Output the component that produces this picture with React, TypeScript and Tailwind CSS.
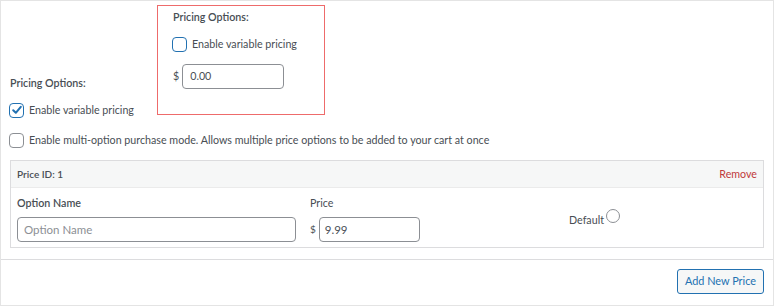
import React from "react";

function Checkbox({ checked, focus }: { checked?: boolean; focus?: boolean }) {
  return (
    <span
      className={`inline-flex h-[15px] w-[15px] shrink-0 items-center justify-center rounded-[4px] border bg-white ${
        focus ? "border-[#2271b1] border-[1.5px]" : "border-[#8c8f94]"
      }`}
    >
      {checked && (
        <svg width="12" height="12" viewBox="0 0 12 12">
          <path d="M2.2 6.2 L4.8 8.8 L9.8 2.8" fill="none" stroke="#2271b1" strokeWidth="2" strokeLinecap="round" strokeLinejoin="round" />
        </svg>
      )}
    </span>
  );
}

export default function App() {
  return (
    <div
      className="w-[774px] h-[306px] border border-[#e4e4e4] bg-white text-[10.7px] text-[#484e54] overflow-hidden"
      style={{ fontFamily: 'Lato, "Noto Sans", sans-serif' }}
    >
      <div className="flex pt-[4px]">
        <div className="w-[156px] pl-[8px] pt-[69px]">
          <div className="h-[18px] leading-[18px] pl-[1px] font-semibold">Pricing Options:</div>
          <div className="mt-[9px] flex h-[18px] items-center gap-[5px]">
            <Checkbox checked focus />
            <span className="leading-[18px]">Enable variable pricing</span>
          </div>
        </div>
        <div className="h-[110px] w-[168px] border border-[#ee6b6b] pl-[15px] pt-[2px]">
          <div className="h-[18px] leading-[18px] font-semibold">Pricing Options:</div>
          <div className="mt-[9px] flex h-[18px] items-center gap-[5px] -ml-[1px]">
            <Checkbox focus />
            <span className="leading-[18px]">Enable variable pricing</span>
          </div>
          <div className="mt-[11px] flex items-center gap-[3px]">
            <span>$</span>
            <div className="flex h-[25px] w-[102px] items-center rounded-[4px] border border-[#8c8f94] px-[7px]">
              0.00
            </div>
          </div>
        </div>
      </div>
      <div className="mt-[12px] flex h-[18px] items-center gap-[5px] pl-[8px]">
        <Checkbox />
        <span className="leading-[18px]">
          Enable multi-option purchase mode. Allows multiple price options to be added to your cart at once
        </span>
      </div>
      <div className="mx-[9px] mt-[11px] h-[88px] border border-[#dcdcde]">
        <div className="flex h-[27px] items-center justify-between border-b border-[#ebebeb] bg-[#f6f7f7] px-[6px]">
          <span className="font-semibold text-[10px]">Price ID: 1</span>
          <span className="text-[#c0393b]">Remove</span>
        </div>
        <div className="flex px-[6px] pt-[7px]">
          <div className="w-[293px]">
            <div className="h-[16px] leading-[16px] font-semibold">Option Name</div>
            <div className="mt-[6px] flex h-[25px] w-[279px] items-center rounded-[4px] border border-[#8c8f94] px-[6px] text-[11.5px] text-[#8c8f94]">
              Option Name
            </div>
          </div>
          <div className="w-[259px]">
            <div className="h-[16px] leading-[16px]">Price</div>
            <div className="mt-[6px] flex items-center gap-[3px]">
              <span className="text-[10px]">$</span>
              <div className="flex h-[25px] w-[101px] items-center rounded-[4px] border border-[#8c8f94] px-[5px] text-[11.5px]">
                9.99
              </div>
            </div>
          </div>
          <div className="flex items-end gap-[2px] pt-[2px] h-[32px]">
            <span className="leading-[15px]">Default</span>
            <span className="mb-[4px] h-[14px] w-[14px] rounded-full border border-[#8c8f94]" />
          </div>
        </div>
      </div>
      <div className="mt-[11px] h-px w-full bg-[#dcdcde]" />
      <div className="flex justify-end pr-[9px] pt-[9px]">
        <button className="h-[25px] w-[87px] rounded-[3px] border border-[#2271b1] bg-[#f6f7f7] text-[10.9px] text-[#2271b1]">
          Add New Price
        </button>
      </div>
    </div>
  );
}
